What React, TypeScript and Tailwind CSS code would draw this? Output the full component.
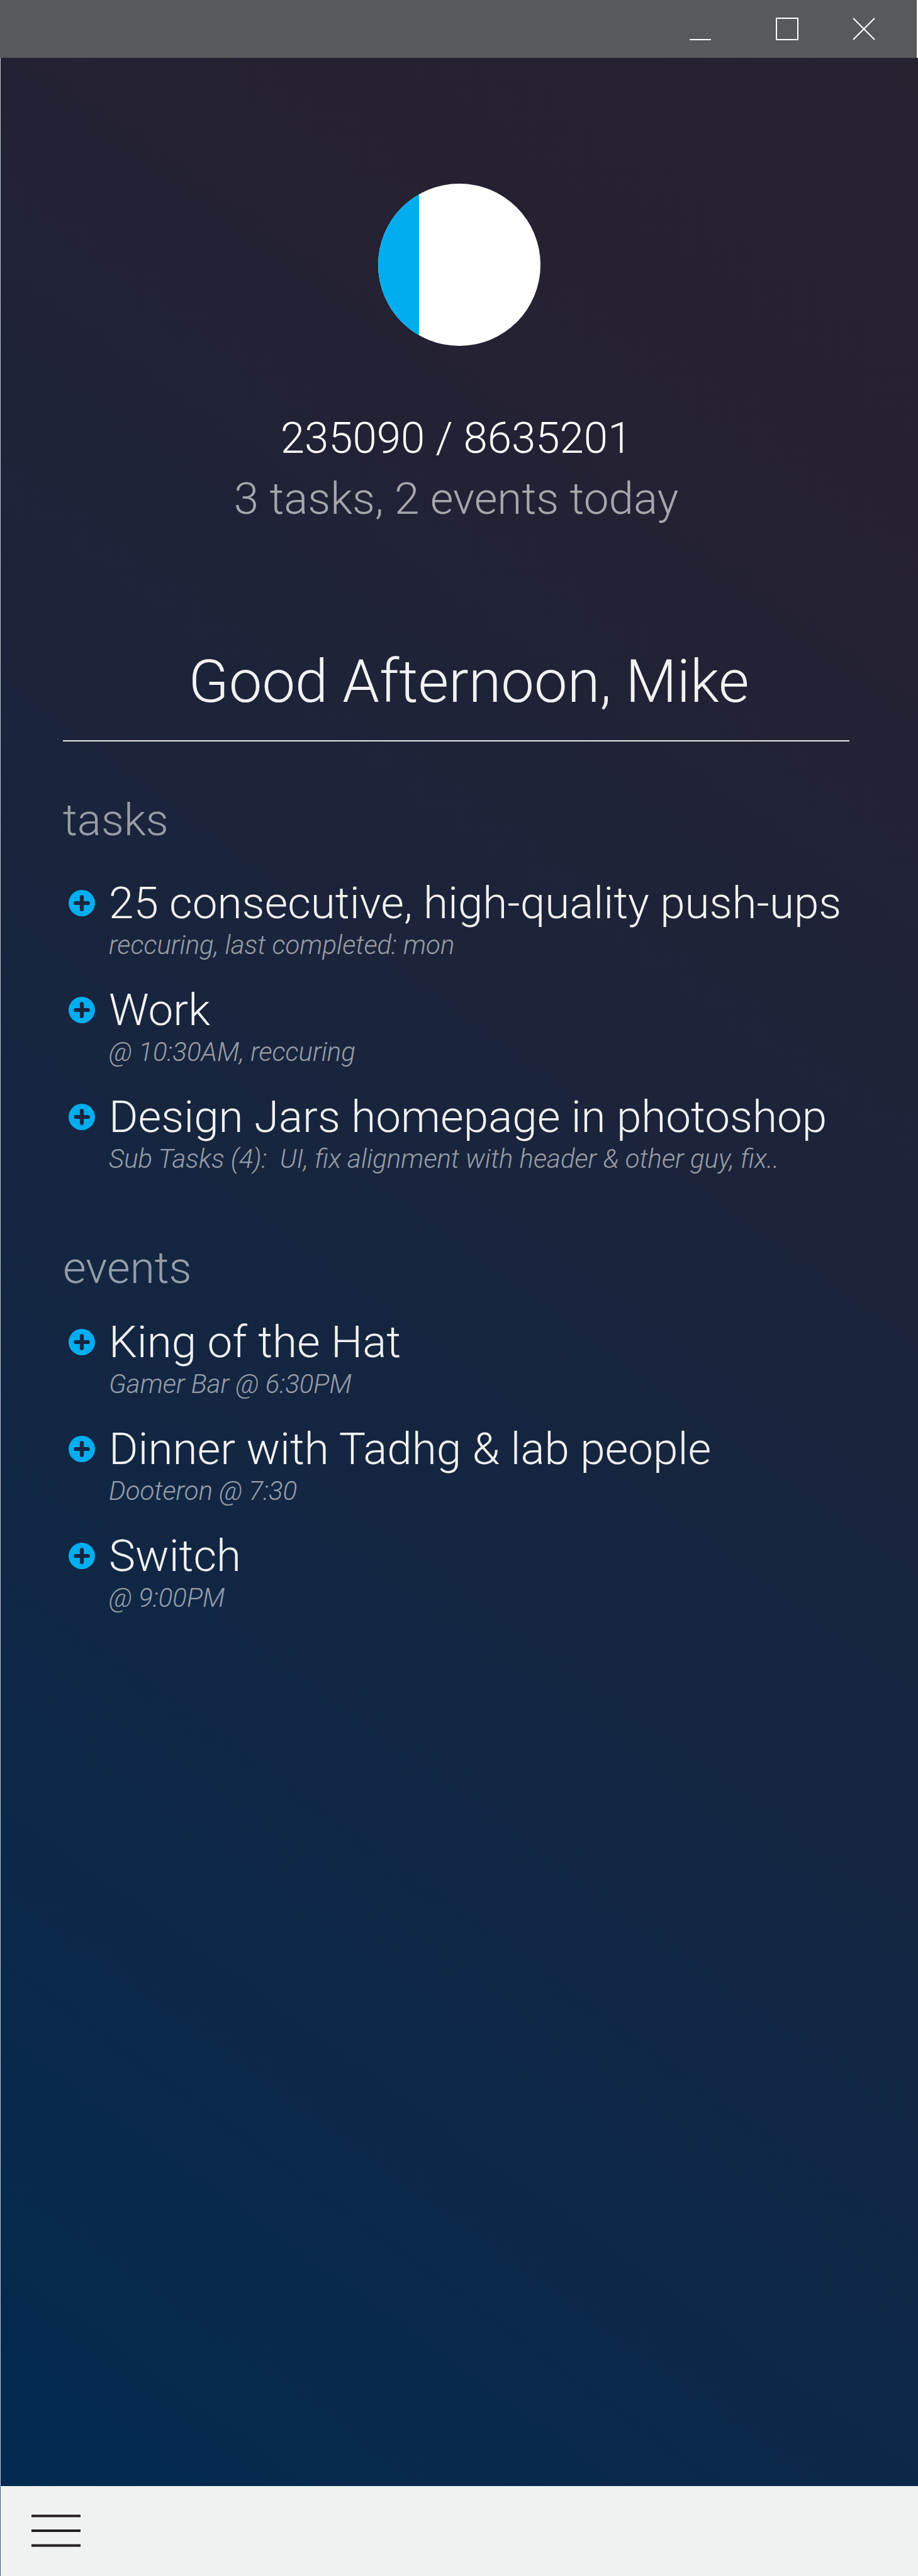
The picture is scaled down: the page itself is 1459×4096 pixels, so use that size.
import { useId } from "react";

type Entry = { title: string; detail: string };

const tasks: Entry[] = [
  { title: "25 consecutive, high-quality push-ups", detail: "reccuring, last completed: mon" },
  { title: "Work", detail: "@ 10:30AM, reccuring" },
  {
    title: "Design Jars homepage in photoshop",
    detail: "Sub Tasks (4):\u00a0 UI, fix alignment with header & other guy, fix..",
  },
];

const events: Entry[] = [
  { title: "King of the Hat", detail: "Gamer Bar @ 6:30PM" },
  { title: "Dinner with Tadhg & lab people", detail: "Dooteron @ 7:30" },
  { title: "Switch", detail: "@ 9:00PM" },
];

function TitleBar() {
  return (
    <header className="flex h-[92px] items-center justify-end gap-[86px] border-r-2 border-white bg-[#58595b] pr-[66px]">
      <button type="button" aria-label="Minimize" className="mr-4">
        <svg viewBox="0 0 36 36" className="block size-9" fill="none" stroke="white" strokeWidth="2">
          <path d="M1 35H35" />
        </svg>
      </button>
      <button type="button" aria-label="Maximize">
        <svg viewBox="0 0 36 36" className="block size-9" fill="none" stroke="white" strokeWidth="2">
          <path d="M1 1H35V35H1Z" />
        </svg>
      </button>
      <button type="button" aria-label="Close">
        <svg viewBox="0 0 36 36" className="block size-9" fill="none" stroke="white" strokeWidth="2">
          <path d="M1 1L35 35M35 1L1 35" />
        </svg>
      </button>
    </header>
  );
}

function ProgressDisc() {
  return (
    <div
      role="img"
      aria-label="Progress"
      className="mx-auto flex size-[258px] overflow-hidden rounded-full bg-white"
    >
      <div className="w-1/4 bg-[#00aeef]" />
    </div>
  );
}

function EntryRow({ title, detail }: Entry) {
  return (
    <li className="flex items-start gap-[22px]">
      <button type="button" aria-label={`Expand ${title}`} className="flex h-20 items-center">
        <svg viewBox="0 0 42 42" className="block size-[42px]">
          <path
            fill="#00aeef"
            fillRule="evenodd"
            d="M21 0a21 21 0 1 1 0 42a21 21 0 1 1 0-42ZM21 8.2a3.1 3.1 0 0 0-3.1 3.1V17.9H11.3a3.1 3.1 0 0 0 0 6.2H17.9V30.7a3.1 3.1 0 0 0 6.2 0V24.1H30.7a3.1 3.1 0 0 0 0-6.2H24.1V11.3a3.1 3.1 0 0 0-3.1-3.1Z"
          />
        </svg>
      </button>
      <div className="whitespace-nowrap">
        <h3 className="text-[71px] leading-[80px] text-[#f1f2f2]">{title}</h3>
        <p className="text-[42px] italic leading-[54px] text-white/55">{detail}</p>
      </div>
    </li>
  );
}

function Section({ name, entries, className }: { name: string; entries: Entry[]; className: string }) {
  const id = useId();
  return (
    <section aria-labelledby={id} className={`flex flex-col ${className}`}>
      <h2 id={id} className="text-[71px] leading-[80px] text-white/55">
        {name}
      </h2>
      <ul className="flex flex-col gap-9 pl-[9px]">
        {entries.map((e) => (
          <EntryRow key={e.title} {...e} />
        ))}
      </ul>
    </section>
  );
}

export default function App() {
  return (
    <div className="flex min-h-screen flex-col bg-[#032a50] font-['Roboto','Liberation_Sans',sans-serif] font-light">
      <TitleBar />
      <main className="flex-1 border-l border-[#b9c4cf] bg-[linear-gradient(216deg,#272230_0%,#262131_14%,#032a50_100%)] pt-[200px]">
        <ProgressDisc />
        <div className="pl-[99px] pr-[109px]">
          <div className="mt-[99px] text-center leading-[96px]">
            <p className="text-[69px] text-white">235090 / 8635201</p>
            <p className="text-[71px] text-white/60">3 tasks, 2 events today</p>
          </div>
          <h1 className="mt-[191px] border-b-2 border-[#e6e7e8] pb-[41px] pl-10 text-center text-[94px] leading-[104px] text-[#f1f2f2]">
            Good Afternoon, Mike
          </h1>
          <Section name="tasks" entries={tasks} className="mt-[85px] gap-[52px]" />
          <Section name="events" entries={events} className="mt-[106px] gap-[38px]" />
        </div>
      </main>
      <footer className="flex h-[143px] items-start border-l border-[#3d5c80] bg-[#f0f2f1] pl-[49px] pt-[45px]">
        <button type="button" aria-label="Menu">
          <svg viewBox="0 0 78 52" className="block h-[52px] w-[78px]" stroke="#231f20" strokeWidth="4">
            <path d="M0 2.5H78M0 26H78M0 49.5H78" />
          </svg>
        </button>
      </footer>
    </div>
  );
}
